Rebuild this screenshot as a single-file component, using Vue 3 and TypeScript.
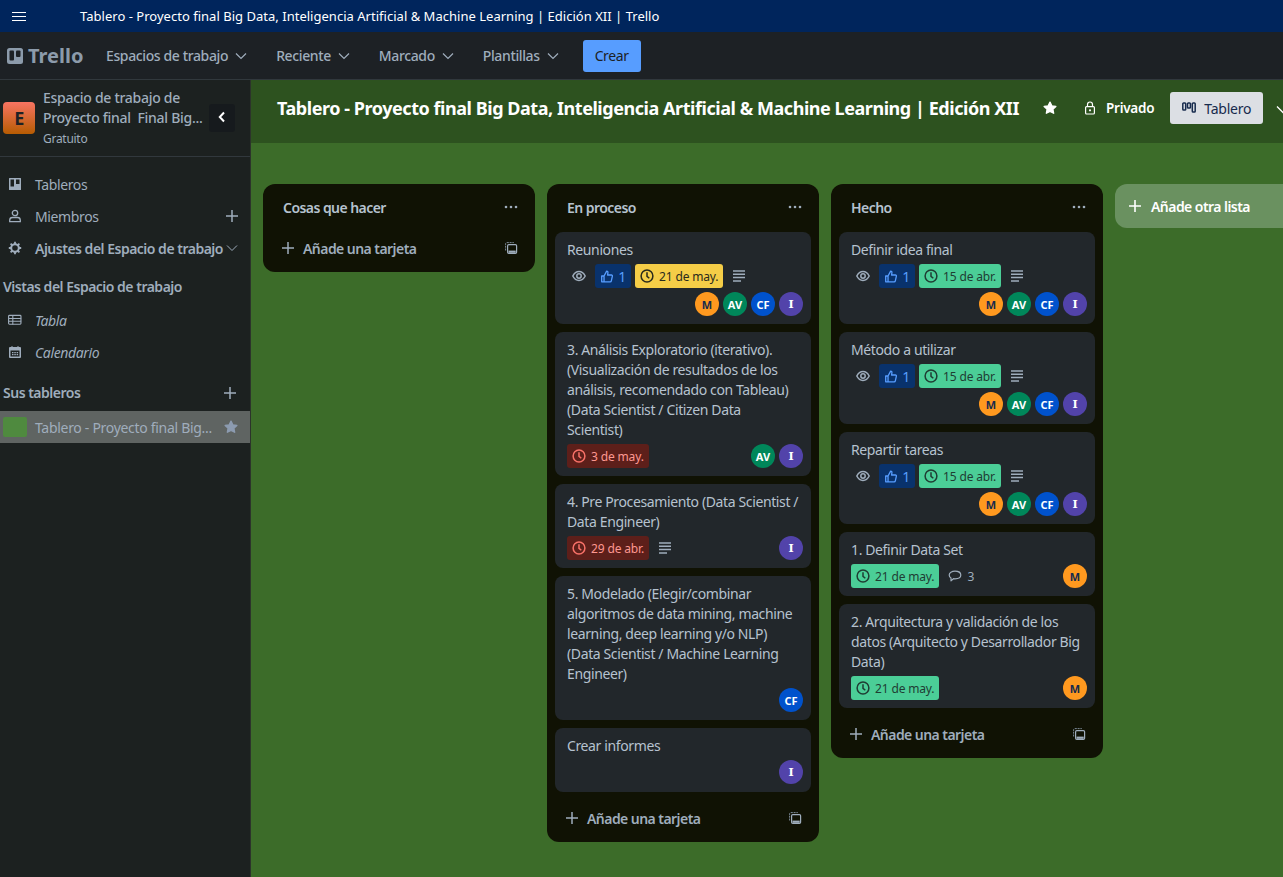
<script setup lang="ts">
type Badge = { kind: 'eye' | 'like' | 'date' | 'desc' | 'comment'; text?: string; tone?: string }
type Card = { title: string[]; badges: Badge[]; members: string[]; stacked?: boolean }
type List = { name: string; cards: Card[] }

const eyeLike: Badge[] = [{ kind: 'eye' }, { kind: 'like', text: '1' }]
const abr15: Badge[] = [...eyeLike, { kind: 'date', text: '15 de abr.', tone: 'green' }, { kind: 'desc' }]
const all = ['M', 'AV', 'CF', 'I']

const lists: List[] = [
  { name: 'Cosas que hacer', cards: [] },
  {
    name: 'En proceso',
    cards: [
      { title: ['Reuniones'], badges: [...eyeLike, { kind: 'date', text: '21 de may.', tone: 'yellow' }, { kind: 'desc' }], members: all, stacked: true },
      {
        title: ['3. Análisis Exploratorio (iterativo).', '(Visualización de resultados de los', 'análisis, recomendado con Tableau)', '(Data Scientist / Citizen Data', 'Scientist)'],
        badges: [{ kind: 'date', text: '3 de may.', tone: 'red' }],
        members: ['AV', 'I']
      },
      {
        title: ['4. Pre Procesamiento (Data Scientist /', 'Data Engineer)'],
        badges: [{ kind: 'date', text: '29 de abr.', tone: 'red' }, { kind: 'desc' }],
        members: ['I']
      },
      {
        title: ['5. Modelado (Elegir/combinar', 'algoritmos de data mining, machine', 'learning, deep learning y/o NLP)', '(Data Scientist / Machine Learning', 'Engineer)'],
        badges: [],
        members: ['CF'],
        stacked: true
      },
      { title: ['Crear informes'], badges: [], members: ['I'], stacked: true }
    ]
  },
  {
    name: 'Hecho',
    cards: [
      { title: ['Definir idea final'], badges: abr15, members: all, stacked: true },
      { title: ['Método a utilizar'], badges: abr15, members: all, stacked: true },
      { title: ['Repartir tareas'], badges: abr15, members: all, stacked: true },
      { title: ['1. Definir Data Set'], badges: [{ kind: 'date', text: '21 de may.', tone: 'green' }, { kind: 'comment', text: '3' }], members: ['M'] },
      {
        title: ['2. Arquitectura y validación de los', 'datos (Arquitecto y Desarrollador Big', 'Data)'],
        badges: [{ kind: 'date', text: '21 de may.', tone: 'green' }],
        members: ['M']
      }
    ]
  }
]

const navItems = ['Espacios de trabajo', 'Reciente', 'Marcado', 'Plantillas']
const avatarClass: Record<string, string> = { M: 'av-m', AV: 'av-a', CF: 'av-c', I: 'av-i' }

const star = 'M12 3.2l2.7 5.6 6.1.8-4.5 4.2 1.2 6.1L12 17l-5.5 2.9 1.2-6.1-4.5-4.2 6.1-.8z'
</script>

<template>
  <div class="page">
    <div class="titlebar">
      <svg class="burger" width="14" height="9" viewBox="0 0 14 9"><path d="M0 .5h14M0 4.5h14M0 8.500h14" stroke="#fff" stroke-width="1" /></svg>
      <span class="window-title">Tablero - Proyecto final Big Data, Inteligencia Artificial &amp; Machine Learning | Edición XII | Trello</span>
    </div>

    <header class="nav">
      <div class="logo">
        <svg width="16" height="16" viewBox="0 0 16 16"><rect width="16" height="16" rx="2.500" fill="#8c9bab" /><rect x="2.500" y="2.500" width="4.500" height="10" rx="1" fill="#1d2125" /><rect x="9" y="2.500" width="4.500" height="6.500" rx="1" fill="#1d2125" /></svg>
        <span>Trello</span>
      </div>
      <button v-for="item in navItems" :key="item" class="nav-item">
        {{ item }}
        <svg width="14" height="14" viewBox="0 0 14 14"><path d="M2 4.500l5 5 5-5" fill="none" stroke="currentColor" stroke-width="1.200" /></svg>
      </button>
      <button class="create">Crear</button>
    </header>

    <div class="body">
      <aside class="sidebar">
        <div class="ws">
          <div class="ws-logo">E</div>
          <div class="ws-text">
            <div>Espacio de trabajo de</div>
            <div>Proyecto final&nbsp; Final Big...</div>
            <small>Gratuito</small>
          </div>
          <button class="collapse">
            <svg width="10" height="12" viewBox="0 0 10 12"><path d="M7 1.500L2.800 6 7 10.500" fill="none" stroke="#fff" stroke-width="2" /></svg>
          </button>
        </div>

        <nav class="menu">
          <div class="row">
            <svg width="14" height="14" viewBox="0 0 14 14"><path fill="#9fadbc" fill-rule="evenodd" d="M1.500 1h11a.5.5 0 0 1 .5.5v11a.5.5 0 0 1-.5.5h-11a.5.5 0 0 1-.5-.5v-11a.5.5 0 0 1 .5-.5zM2.500 2.500v7h3.500v-7zM8 2.500v4.500h3.500v-4.500z" /></svg>
            <span>Tableros</span>
          </div>
          <div class="row">
            <svg width="14" height="14" viewBox="0 0 14 14"><g fill="none" stroke="#9fadbc" stroke-width="1.300"><circle cx="7" cy="4" r="2.700" /><path d="M1.700 12.700v-1.500c0-1.500 1.300-2.700 2.800-2.700h5c1.500 0 2.800 1.200 2.800 2.700v1.500z" /></g></svg>
            <span>Miembros</span>
            <svg class="end" width="14" height="14" viewBox="0 0 14 14"><path d="M7 1v12M1 7h12" stroke="#9fadbc" stroke-width="1.500" /></svg>
          </div>
          <div class="row strong">
            <svg width="14" height="14" viewBox="0 0 14 14"><circle cx="7" cy="7" r="3.800" fill="none" stroke="#9fadbc" stroke-width="2" /><path d="M7 .8v2.400M7 10.800v2.400M.8 7h2.400M10.800 7h2.400M2.600 2.600l1.700 1.700M9.700 9.700l1.700 1.700M2.600 11.400l1.700-1.700M9.700 4.300l1.700-1.700" stroke="#9fadbc" stroke-width="1.800" /></svg>
            <span>Ajustes del Espacio de trabajo</span>
            <svg class="chev" width="12" height="12" viewBox="0 0 12 12"><path d="M1 3.500l5 5 5-5" fill="none" stroke="#9fadbc" stroke-width="1" /></svg>
          </div>
        </nav>

        <h3 class="side-title views">Vistas del Espacio de trabajo</h3>
        <div class="row italic">
          <svg width="16" height="12" viewBox="0 0 16 12"><rect x=".7" y=".7" width="14.100" height="10.100" rx="1" fill="none" stroke="#9fadbc" stroke-width="1.300" /><path d="M1 4.200h14M1 7.500h14M5.500 1v10" stroke="#9fadbc" stroke-width="1.200" /></svg>
          <span>Tabla</span>
        </div>
        <div class="row italic">
          <svg width="12" height="12" viewBox="0 0 12 12"><path fill="#9fadbc" fill-rule="evenodd" d="M2.500 0h1v1h5V0h1v1H11a1 1 0 0 1 1 1v9a1 1 0 0 1-1 1H1a1 1 0 0 1-1-1V2a1 1 0 0 1 1-1h1.500zM1.500 4.500v6h9v-6zM3 6h1.500v1.300H3zM5.300 6h1.500v1.300H5.300zM7.600 6h1.500v1.300H7.600zM3 8h1.500v1.300H3zM5.300 8h1.500v1.300H5.300zM7.600 8h1.500v1.300H7.600z" /></svg>
          <span>Calendario</span>
        </div>

        <div class="side-title boards">
          <span>Sus tableros</span>
          <svg width="14" height="14" viewBox="0 0 14 14"><path d="M7 1v12M1 7h12" stroke="#9fadbc" stroke-width="1.500" /></svg>
        </div>
        <div class="active">
          <div class="thumb"></div>
          <span>Tablero - Proyecto final Big...</span>
          <svg width="16" height="16" viewBox="0 0 24 24"><path :d="star" fill="#8c9bb0" stroke="#8c9bb0" stroke-width="2" stroke-linejoin="round" /></svg>
        </div>
      </aside>

      <main class="board">
        <div class="board-head">
          <h1>Tablero - Proyecto final Big Data, Inteligencia Artificial &amp; Machine Learning | Edición XII</h1>
          <svg class="head-star" width="16" height="16" viewBox="0 0 24 24"><path :d="star" fill="#fff" stroke="#fff" stroke-width="2" stroke-linejoin="round" /></svg>
          <div class="privacy">
            <svg width="12" height="14" viewBox="0 0 12 14"><g fill="none" stroke="#fff" stroke-width="1.200"><rect x="1.600" y="5.600" width="8.800" height="7.400" rx="1" /><path d="M3.500 5.500V3.500a2.500 2.500 0 0 1 5 0v2" /></g><circle cx="6" cy="9.300" r="1.100" fill="#fff" /></svg>
            <span>Privado</span>
          </div>
          <button class="view">
            <svg width="14" height="12" viewBox="0 0 14 12"><g fill="none" stroke="#172b4d" stroke-width="1.500"><rect x=".8" y="1" width="2.900" height="7" rx=".8" /><rect x="5.500" y="1" width="2.900" height="5" rx=".8" /><rect x="10.300" y="1" width="2.900" height="9" rx=".8" /></g></svg>
            Tablero
          </button>
          <svg class="more-chev" width="14" height="14" viewBox="0 0 14 14"><path d="M1 4.500l6 6 6-6" fill="none" stroke="#fff" stroke-width="1.300" /></svg>
        </div>

        <div class="canvas">
          <section v-for="list in lists" :key="list.name" class="list">
            <div class="list-head">
              <h2>{{ list.name }}</h2>
              <svg width="14" height="4" viewBox="0 0 14 4"><g fill="#9fadbc"><circle cx="2" cy="2" r="1.300" /><circle cx="7" cy="2" r="1.300" /><circle cx="12" cy="2" r="1.300" /></g></svg>
            </div>
            <div v-if="list.cards.length" class="cards">
              <article v-for="card in list.cards" :key="card.title[0]" class="card">
                <p class="card-title"><span v-for="line in card.title" :key="line">{{ line }}</span></p>
                <div class="meta" :class="{ stacked: card.stacked }">
                  <div v-if="card.badges.length" class="badges">
                    <template v-for="(b, i) in card.badges" :key="i">
                      <svg v-if="b.kind === 'eye'" class="eye" width="14" height="12" viewBox="0 0 14 12"><g fill="none" stroke="#9fadbc" stroke-width="1.500"><path d="M.8 6C2.300 3 4.400 1.500 7 1.500S11.700 3 13.200 6C11.700 9 9.600 10.500 7 10.500S2.300 9 .8 6z" /><circle cx="7" cy="6" r="2.200" /></g></svg>
                      <span v-else-if="b.kind === 'like'" class="chip like">
                        <svg width="13" height="13" viewBox="0 0 12 12"><path d="M.7 5.500h2.300v5.800H.7zM3 5.500L5.600.7c1 0 1.400.8 1.200 1.800L6.500 4.500h3.700c.8 0 1.200.7 1 1.400l-1 4.400c-.1.600-.6 1-1.200 1H3" fill="none" stroke="#579dff" stroke-width="1.300" stroke-linejoin="round" /></svg>
                        {{ b.text }}
                      </span>
                      <span v-else-if="b.kind === 'date'" class="chip" :class="b.tone">
                        <svg width="14" height="14" viewBox="0 0 14 14"><g fill="none" stroke="currentColor" stroke-width="1.500"><circle cx="7" cy="7" r="5.900" /><path d="M7 3.300V7.300l2.300 2" /></g></svg>
                        {{ b.text }}
                      </span>
                      <svg v-else-if="b.kind === 'desc'" class="desc" width="12" height="12" viewBox="0 0 12 12"><path d="M0 1h12M0 4.300h12M0 7.600h12M0 10.900h8" stroke="#9fadbc" stroke-width="1.500" /></svg>
                      <span v-else class="comment">
                        <svg width="14" height="12" viewBox="0 0 14 12"><path d="M7 1.200c3.200 0 5.800 1.500 5.800 3.800S10.200 8.800 7 8.800c-.6 0-1 0-1.500-.1L3 10.800V8C1.900 7.400 1.200 6.300 1.200 5 1.200 2.700 3.800 1.200 7 1.200z" fill="none" stroke="#9fadbc" stroke-width="1.200" stroke-linejoin="round" /></svg>
                        {{ b.text }}
                      </span>
                    </template>
                  </div>
                  <div class="members">
                    <span v-for="m in card.members" :key="m" class="avatar" :class="avatarClass[m]">{{ m }}</span>
                  </div>
                </div>
              </article>
            </div>
            <div class="add-card">
              <svg width="14" height="14" viewBox="0 0 14 14"><path d="M7 1v12M1 7h12" stroke="#9fadbc" stroke-width="1.500" /></svg>
              <span>Añade una tarjeta</span>
              <svg class="tpl" width="14" height="14" viewBox="0 0 14 14"><path d="M1.600 9.500V2.800c0-.7.500-1.200 1.200-1.200h7" fill="none" stroke="#7d8a98" stroke-width="1" stroke-dasharray="2 .8" /><rect x="3.600" y="3.600" width="9" height="8.800" rx="1.200" fill="none" stroke="#9fadbc" stroke-width="1.200" /><rect x="4.500" y="9.600" width="7.200" height="2.200" fill="#9fadbc" /></svg>
            </div>
          </section>

          <div class="add-list">
            <svg width="14" height="14" viewBox="0 0 14 14"><path d="M7 1v12M1 7h12" stroke="#fff" stroke-width="1.600" /></svg>
            <span>Añade otra lista</span>
          </div>
        </div>
      </main>
    </div>
  </div>
</template>

<style>
html, body {
  margin: 0;
  overflow: hidden;
}
</style>

<style scoped>
.page {
  width: 1283px;
  height: 877px;
  display: flex;
  flex-direction: column;
  overflow: hidden;
  font-family: "Noto Sans", "Open Sans", sans-serif;
  font-size: 14px;
  letter-spacing: -0.38px;
  color: #b6c2cf;
}

.titlebar {
  height: 32px;
  flex: none;
  display: flex;
  align-items: center;
  background: #00255c;
  color: #fff;
  font-size: 13px;
  letter-spacing: 0.02px;
}

.burger {
  margin-left: 12px;
}

.window-title {
  margin-left: 54px;
}

.nav {
  height: 47px;
  flex: none;
  display: flex;
  align-items: center;
  background: #1d2125;
  border-bottom: 1px solid #31383d;
}

.logo {
  width: 78px;
  flex: none;
  padding-left: 7px;
  box-sizing: border-box;
  display: flex;
  align-items: center;
  gap: 5px;
  color: #8c9bab;
  font-size: 20px;
  font-weight: 700;
  letter-spacing: 0;
}

.logo svg {
  flex: none;
}

.nav-item {
  display: flex;
  align-items: center;
  gap: 6px;
  margin-left: 28px;
  padding: 0;
  border: 0;
  background: none;
  color: #9fadbc;
  font: inherit;
  letter-spacing: inherit;
  font-weight: 500;
}

.create {
  width: 58px;
  height: 32px;
  margin-left: 23px;
  border: 0;
  border-radius: 3px;
  background: #579dff;
  color: #1d2125;
  font: inherit;
  letter-spacing: inherit;
}

.body {
  flex: 1;
  min-height: 0;
  display: flex;
}

.sidebar {
  width: 250px;
  flex: none;
  background: #1c2120;
  border-right: 1px solid #2c332b;
}

.ws {
  height: 76px;
  display: flex;
  align-items: center;
  padding-left: 3px;
  border-bottom: 1px solid #31383d;
  color: #9fadbc;
  font-weight: 500;
}

.ws-logo {
  width: 32px;
  height: 32px;
  flex: none;
  border-radius: 4px;
  display: flex;
  align-items: center;
  justify-content: center;
  background: linear-gradient(#f87462, #b65c02);
  color: #1d2125;
  font-size: 18px;
  font-weight: 700;
}

.ws-text {
  width: 166px;
  align-self: flex-start;
  margin-left: 8px;
  padding-top: 8px;
  line-height: 20px;
  letter-spacing: -0.28px;
  white-space: nowrap;
}

.ws-text small {
  display: block;
  font-size: 12px;
  font-weight: 400;
  line-height: 22px;
}

.collapse {
  width: 26px;
  height: 28px;
  padding: 0;
  border: 0;
  border-radius: 3px;
  background: #161a1d;
}

.menu {
  padding-top: 11px;
}

.row {
  height: 32px;
  display: flex;
  align-items: center;
  padding-left: 8px;
  color: #9fadbc;
}

.row > svg:first-child {
  width: 14px;
  margin-right: 13px;
  flex: none;
}

.row .end {
  margin-left: auto;
  margin-right: 11px;
}

.strong {
  font-weight: 600;
  letter-spacing: -0.5px;
  white-space: nowrap;
}

.chev {
  margin-left: 3px;
}

.side-title {
  margin: 0;
  padding-left: 3px;
  color: #9fadbc;
  font-size: 14px;
  font-weight: 600;
  line-height: 20px;
  letter-spacing: -0.5px;
}

.views {
  padding-top: 13px;
  padding-bottom: 7px;
}

.italic {
  font-style: italic;
}

.boards {
  display: flex;
  justify-content: space-between;
  align-items: center;
  padding-top: 15px;
  padding-right: 13px;
  padding-bottom: 8px;
}

.active {
  height: 32px;
  display: flex;
  align-items: center;
  background: #5f6462;
  color: #9fadbc;
  letter-spacing: -0.3px;
  white-space: nowrap;
}

.thumb {
  width: 24px;
  height: 20px;
  flex: none;
  margin: 0 8px 0 3px;
  border-radius: 2px;
  background: #4f8a3f;
}

.active svg {
  margin-left: auto;
  margin-right: 11px;
}

.board {
  flex: 1;
  min-width: 0;
  display: flex;
  flex-direction: column;
  background: #3c6c29;
  overflow: hidden;
}

.board-head {
  height: 63px;
  flex: none;
  box-sizing: border-box;
  display: flex;
  align-items: flex-start;
  padding: 12px 0 0 26px;
  background: #2d521f;
  color: #fff;
  white-space: nowrap;
}

.board-head h1 {
  margin: 0;
  font-size: 18px;
  font-weight: 700;
  line-height: 32px;
  letter-spacing: -0.45px;
}

.head-star {
  margin: 8px 0 0 23px;
  flex: none;
}

.privacy {
  display: flex;
  align-items: center;
  gap: 10px;
  height: 32px;
  margin-left: 26px;
  font-weight: 600;
  font-size: 13.500px;
  letter-spacing: -0.25px;
  flex: none;
}

.view {
  height: 32px;
  width: 93px;
  flex: none;
  margin-left: 16px;
  display: flex;
  align-items: center;
  justify-content: center;
  gap: 8px;
  padding: 0;
  border: 0;
  border-radius: 3px;
  background: #dcdfe4;
  color: #172b4d;
  font: inherit;
  letter-spacing: -0.25px;
}

.more-chev {
  margin: 10px 0 0 13px;
  flex: none;
}

.canvas {
  display: flex;
  align-items: flex-start;
  gap: 12px;
  padding: 41px 0 0 12px;
}

.list {
  width: 272px;
  flex: none;
  box-sizing: border-box;
  padding-bottom: 8px;
  border-radius: 12px;
  background: #101204;
}

.list-head {
  height: 48px;
  box-sizing: border-box;
  display: flex;
  align-items: center;
  justify-content: space-between;
  padding: 0 17px 2px 20px;
}

.list-head h2 {
  margin: 0;
  font-size: 14px;
  font-weight: 600;
  letter-spacing: -0.55px;
  color: #b6c2cf;
}

.cards {
  display: flex;
  flex-direction: column;
  gap: 8px;
  padding: 0 8px;
  margin-bottom: 10px;
}

.card {
  padding: 8px 8px 8px 12px;
  border-radius: 8px;
  background: #22272b;
}

.card-title {
  margin: 0 0 4px;
  line-height: 20px;
  color: #b6c2cf;
}

.card-title span {
  display: block;
  white-space: nowrap;
}

.meta {
  display: flex;
  justify-content: space-between;
  align-items: flex-start;
}

.meta.stacked {
  flex-direction: column;
  gap: 4px;
}

.badges {
  display: flex;
  align-items: center;
  height: 24px;
  gap: 4px;
}

.members {
  display: flex;
  gap: 4px;
  margin-left: auto;
}

.avatar {
  width: 24px;
  height: 24px;
  border-radius: 50%;
  display: flex;
  align-items: center;
  justify-content: center;
  font-size: 11px;
  font-weight: 700;
  letter-spacing: 0;
}

.av-m { background: #ff991f; color: #172b4d; }
.av-a { background: #00875a; color: #fff; }
.av-c { background: #0052cc; color: #fff; }
.av-i { background: #5243aa; color: #fff; font-family: "DejaVu Serif", serif; }

.eye {
  margin: 0 5px 0 5px;
}

.desc {
  margin-left: 6px;
}

.chip {
  height: 24px;
  box-sizing: border-box;
  display: inline-flex;
  align-items: center;
  gap: 5px;
  padding: 0 5px;
  border-radius: 3px;
  font-size: 12px;
  letter-spacing: -0.15px;
}

.like {
  width: 36px;
  padding-left: 6px;
  gap: 5px;
  background: #09326c;
  color: #579dff;
  font-size: 14px;
}

.yellow { background: #f5cd47; color: #2a2a1c; }
.green { background: #4bce97; color: #1f3d33; }
.red { background: #5d1f1a; color: #fd9891; }
.red svg { color: #f87168; }

.comment {
  display: inline-flex;
  align-items: center;
  gap: 5px;
  margin-left: 5px;
  font-size: 12px;
  color: #9fadbc;
}

.add-card {
  display: flex;
  align-items: center;
  height: 32px;
  padding: 0 17px 0 18px;
  color: #9fadbc;
  font-weight: 600;
  letter-spacing: -0.55px;
}

.add-card span {
  margin-left: 8px;
}

.tpl {
  margin-left: auto;
}

.add-list {
  width: 272px;
  height: 44px;
  flex: none;
  box-sizing: border-box;
  display: flex;
  align-items: center;
  gap: 9px;
  padding-left: 13px;
  border-radius: 12px;
  background: #6a9160;
  color: #fff;
  font-weight: 600;
  letter-spacing: -0.55px;
}
</style>
